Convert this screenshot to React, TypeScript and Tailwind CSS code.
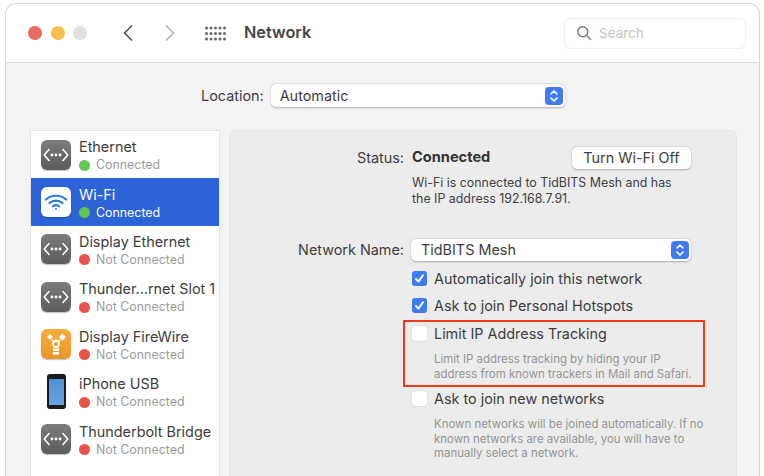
const font = { fontFamily: 'Inter, "Noto Sans", sans-serif' };

function EthernetIcon() {
  return (
    <div className="w-[30px] h-[30px] rounded-[6px] bg-gradient-to-b from-[#7c7c7c] to-[#5c5c5c] shadow-[0_1px_1px_rgba(0,0,0,0.25)] flex items-center justify-center shrink-0">
      <svg width="26" height="16" viewBox="0 0 26 16" fill="none" stroke="#fff" strokeWidth="1.6" strokeLinecap="round" strokeLinejoin="round">
        <path d="M6 2.5 1.2 8 6 13.5" />
        <path d="M20 2.5 24.8 8 20 13.5" />
        <circle cx="9" cy="8" r="0.6" fill="#fff" />
        <circle cx="13" cy="8" r="0.6" fill="#fff" />
        <circle cx="17" cy="8" r="0.6" fill="#fff" />
      </svg>
    </div>
  );
}

function WifiIcon() {
  return (
    <div className="w-[30px] h-[30px] rounded-[6px] bg-white shadow-[0_1px_1px_rgba(0,0,0,0.25)] flex items-center justify-center shrink-0">
      <svg width="24" height="20" viewBox="0 0 24 20" fill="none" stroke="#2a7be4" strokeWidth="2.2" strokeLinecap="round">
        <path d="M2 7.5C7.5 2.5 16.5 2.5 22 7.5" />
        <path d="M5.5 11C9.2 7.8 14.8 7.8 18.5 11" />
        <path d="M9 14.3c1.8-1.4 4.2-1.4 6 0" />
        <circle cx="12" cy="17" r="1.1" fill="#2a7be4" stroke="none" />
      </svg>
    </div>
  );
}

function FireWireIcon() {
  return (
    <div className="w-[30px] h-[30px] rounded-[6px] bg-gradient-to-b from-[#f6ad3c] to-[#ec9427] shadow-[0_1px_1px_rgba(0,0,0,0.25)] flex items-center justify-center shrink-0">
      <svg width="24" height="26" viewBox="0 0 24 26" fill="none">
        <path d="M3 6l3-3 3 3-3 3z" fill="#fff" />
        <path d="M15 6l3.5-3.5L22 6l-3.5 3.5z" fill="#fff" />
        <path d="M12 8v2M7.5 8.5l2 2M16.5 8.5l-2 2" stroke="#fff" strokeWidth="1.2" />
        <circle cx="12" cy="13" r="3" stroke="#fff" strokeWidth="1.8" />
        <rect x="9" y="17.5" width="6" height="2.6" fill="#fff" />
        <rect x="9" y="21" width="6" height="2.6" fill="#fff" />
      </svg>
    </div>
  );
}

function PhoneIcon() {
  return (
    <div className="w-[30px] h-[36px] flex items-center justify-center shrink-0">
      <div className="w-[19px] h-[35px] rounded-[3px] bg-[#1b1b1d] flex flex-col items-center justify-center">
        <div className="w-[15px] h-[26px] bg-gradient-to-b from-[#4d8fd6] to-[#69a4e2]" />
      </div>
    </div>
  );
}

function Dot({ on }: { on: boolean }) {
  return <span className={`w-[11px] h-[11px] rounded-full shrink-0 ${on ? "bg-[#62c554]" : "bg-[#e9534b]"}`} />;
}

function Row({ icon, name, on, selected }: { icon: React.ReactNode; name: string; on: boolean; selected?: boolean }) {
  return (
    <div className={`h-[47.4px] pl-[10px] flex items-center gap-[8px] ${selected ? "bg-[#2c63d6]" : ""}`}>
      {icon}
      <div className="flex flex-col min-w-0 mt-[2px]">
        <span className={`text-[14.4px] leading-[18px] whitespace-nowrap ${selected ? "text-white" : "text-[#3d3d3d]"}`}>{name}</span>
        <span className="flex items-center gap-[6px] mt-px">
          <Dot on={on} />
          <span className={`text-[12.4px] leading-[16px] whitespace-nowrap ${selected ? "text-white" : "text-[#9b9b9b]"}`}>
            {on ? "Connected" : "Not Connected"}
          </span>
        </span>
      </div>
    </div>
  );
}

function Stepper() {
  return (
    <span className="w-[18px] h-[18px] rounded-[4px] bg-[#3f7cf2] flex items-center justify-center shrink-0">
      <svg width="10" height="14" viewBox="0 0 10 14" fill="none" stroke="#fff" strokeWidth="1.6" strokeLinecap="round" strokeLinejoin="round">
        <path d="M2 5l3-3 3 3" />
        <path d="M2 9l3 3 3-3" />
      </svg>
    </span>
  );
}

function Check({ checked }: { checked?: boolean }) {
  return checked ? (
    <span className="w-[15px] h-[15px] rounded-[3px] bg-[#3f7cf2] flex items-center justify-center shrink-0">
      <svg width="11" height="11" viewBox="0 0 11 11" fill="none" stroke="#fff" strokeWidth="1.9" strokeLinecap="round" strokeLinejoin="round">
        <path d="M2 6l2.4 2.6L9 2.2" />
      </svg>
    </span>
  ) : (
    <span className="w-[15px] h-[15px] rounded-[3px] bg-white shadow-[0_0_1px_rgba(0,0,0,0.35)] shrink-0" />
  );
}

function CheckRow({ checked, label }: { checked?: boolean; label: string }) {
  return (
    <div className="h-[27px] flex items-center gap-[7px]">
      <Check checked={checked} />
      <span className="text-[14.4px] text-[#3d3d3d] whitespace-nowrap">{label}</span>
    </div>
  );
}

export default function App() {
  return (
    <div style={font} className="w-[764px] h-[476px] overflow-hidden bg-white pt-[3px] pl-[5px] pr-[4px]">
      <div className="h-[473px] rounded-t-[11px] border border-b-0 border-[#d6d6d6] overflow-hidden flex flex-col">
        {/* Title bar */}
        <div className="h-[59px] shrink-0 bg-white border-b border-[#dcdcdc] flex items-center pl-[22px] pr-[13px]">
          <span className="w-[14px] h-[14px] rounded-full bg-[#ee6a5f]" />
          <span className="w-[14px] h-[14px] rounded-full bg-[#f4be4f] ml-[9px]" />
          <span className="w-[14px] h-[14px] rounded-full bg-[#e0e0e0] ml-[8px]" />
          <svg className="ml-[34px]" width="14" height="18" viewBox="0 0 14 18" fill="none" stroke="#555" strokeWidth="1.7" strokeLinecap="round" strokeLinejoin="round">
            <path d="M10.5 2 3.5 9l7 7" />
          </svg>
          <svg className="ml-[28px]" width="14" height="18" viewBox="0 0 14 18" fill="none" stroke="#b5b5b5" strokeWidth="1.7" strokeLinecap="round" strokeLinejoin="round">
            <path d="M3.5 2l7 7-7 7" />
          </svg>
          <svg className="ml-[28px]" width="21" height="15" viewBox="0 0 21 15" fill="#666">
            {[1.5, 6, 10.5, 15, 19.5].flatMap((x) =>
              [2, 7.5, 13].map((y) => <circle key={`${x}-${y}`} cx={x} cy={y} r="1.5" />)
            )}
          </svg>
          <span className="ml-[18px] text-[16.3px] font-semibold text-[#454545] -mt-px">Network</span>
          <div className="ml-auto w-[182px] h-[31px] rounded-[6px] border border-[#efefef] flex items-center pl-[11px] gap-[7px]">
            <svg width="16" height="16" viewBox="0 0 16 16" fill="none" stroke="#777" strokeWidth="1.4" strokeLinecap="round">
              <circle cx="6.8" cy="6.8" r="5" />
              <path d="M10.5 10.5 14.5 14.5" />
            </svg>
            <span className="text-[13.5px] text-[#c4c4c4]">Search</span>
          </div>
        </div>

        {/* Body */}
        <div className="flex-1 min-h-0 bg-[#f3f3f3] flex flex-col">
          <div className="h-[23px] mt-[21px] flex items-center justify-start pl-[195px] shrink-0">
            <span className="text-[14.4px] text-[#3d3d3d]">Location:</span>
            <div className="ml-[7px] w-[294px] h-[23px] rounded-[5px] bg-white shadow-[0_0.5px_2px_rgba(0,0,0,0.28)] flex items-center pl-[9px] pr-[2px] justify-between">
              <span className="text-[14.4px] text-[#3d3d3d]">Automatic</span>
              <Stepper />
            </div>
          </div>

          <div className="flex-1 min-h-0 flex mt-[23px] pl-[24px]">
            {/* Sidebar */}
            <div className="w-[190px] shrink-0 bg-white border border-b-0 border-[#e4e4e4]">
              <Row icon={<EthernetIcon />} name="Ethernet" on />
              <Row icon={<WifiIcon />} name="Wi-Fi" on selected />
              <Row icon={<EthernetIcon />} name="Display Ethernet" on={false} />
              <Row icon={<EthernetIcon />} name="Thunder...rnet Slot 1" on={false} />
              <Row icon={<FireWireIcon />} name="Display FireWire" on={false} />
              <Row icon={<PhoneIcon />} name="iPhone USB" on={false} />
              <Row icon={<EthernetIcon />} name="Thunderbolt Bridge" on={false} />
            </div>

            {/* Detail panel */}
            <div className="ml-[9px] w-[508px] shrink-0 rounded-t-[6px] bg-[#ececec] border border-b-0 border-[#e6e6e6] pt-[16px] flex flex-col">
              <div className="flex items-center h-[22px]">
                <span className="w-[174px] text-right text-[14.4px] text-[#3d3d3d]">Status:</span>
                <span className="ml-[8px] w-[160px] text-[14.6px] font-bold text-[#333]">Connected</span>
                <div className="w-[119px] h-[22px] rounded-[5px] bg-white shadow-[0_0.5px_2px_rgba(0,0,0,0.28)] flex items-center justify-center text-[14.4px] text-[#3d3d3d]">
                  Turn Wi-Fi Off
                </div>
              </div>
              <p className="ml-[182px] mt-[6px] text-[12.4px] leading-[16px] text-[#3f3f3f] whitespace-nowrap">
                Wi-Fi is connected to TidBITS Mesh and has
                <br />
                the IP address 192.168.7.91.
              </p>
              <div className="flex items-center h-[22px] mt-[32px]">
                <span className="w-[174px] text-right text-[14.4px] text-[#3d3d3d]">Network Name:</span>
                <div className="ml-[7px] w-[280px] h-[22px] rounded-[5px] bg-white shadow-[0_0.5px_2px_rgba(0,0,0,0.28)] flex items-center pl-[10px] pr-[2px] justify-between">
                  <span className="text-[14.4px] text-[#3d3d3d]">TidBITS Mesh</span>
                  <Stepper />
                </div>
              </div>
              <div className="ml-[182px] mt-[4px] flex flex-col">
                <CheckRow checked label="Automatically join this network" />
                <CheckRow checked label="Ask to join Personal Hotspots" />
                <div className="-ml-[9px] w-[302px] h-[67px] border-2 border-[#f5391a] pl-[7px] shrink-0 mt-px">
                  <div className="-mt-[2px]">
                    <CheckRow label="Limit IP Address Tracking" />
                  </div>
                  <p className="ml-[22px] mt-[5px] text-[11.45px] leading-[15px] text-[#949494] whitespace-nowrap">
                    Limit IP address tracking by hiding your IP
                    <br />
                    address from known trackers in Mail and Safari.
                  </p>
                </div>
                <div className="-mt-[2px]">
                  <CheckRow label="Ask to join new networks" />
                </div>
                <p className="ml-[22px] mt-[5px] text-[11.45px] leading-[14.6px] text-[#949494] whitespace-nowrap">
                  Known networks will be joined automatically. If no
                  <br />
                  known networks are available, you will have to
                  <br />
                  manually select a network.
                </p>
              </div>
            </div>
          </div>
        </div>
      </div>
    </div>
  );
}
